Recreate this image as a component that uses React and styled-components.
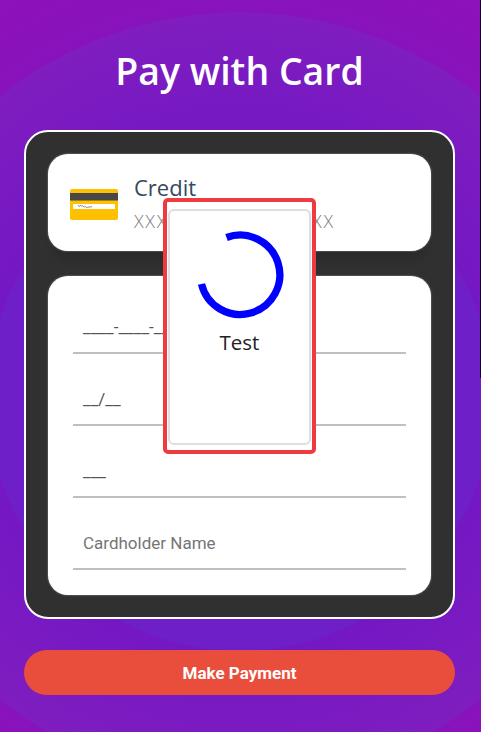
import styled, { createGlobalStyle } from "styled-components";

const GlobalStyle = createGlobalStyle`
  html, body {
    margin: 0;
    padding: 0;
    height: 100%;
  }
  body {
    font-family: "Open Sans", "Liberation Sans", sans-serif;
    overflow: hidden;
  }
`;

const Screen = styled.div`
  position: relative;
  box-sizing: border-box;
  width: 481px;
  height: 732px;
  padding: 44px 26px 0 24px;
  display: flex;
  flex-direction: column;
  align-items: stretch;
  background: radial-gradient(
    circle at 240px 398px,
    #6a20ca 0,
    #6f1fc7 252px,
    #7418c4 253px,
    #7f1dbf 385px,
    #8813bc 386px,
    #9010ba 480px
  );
`;

const EdgeStrip = styled.div`
  position: absolute;
  top: 0;
  right: 0;
  width: 1px;
  height: 378px;
  background: #14051e;
`;

const Title = styled.h1`
  margin: 0 0 32px;
  height: 54px;
  line-height: 54px;
  text-align: center;
  color: #fff;
  font-size: 37.4px;
  font-weight: 600;
`;

const Panel = styled.div`
  box-sizing: border-box;
  height: 489px;
  padding: 22px;
  display: flex;
  flex-direction: column;
  gap: 25px;
  background: #303030;
  border: 2px solid #fff;
  border-radius: 24px;
`;

const WhiteCard = styled.div`
  box-sizing: border-box;
  background: #fff;
  border-radius: 20px;
  box-shadow: 0 0 2px rgba(200, 200, 200, 0.7);
`;

const CardRow = styled(WhiteCard)`
  height: 97px;
  flex: none;
  padding: 0 22px;
  display: flex;
  align-items: center;
  gap: 16px;
  box-shadow: 0 0 2px rgba(200, 200, 200, 0.7), 0 12px 8px -4px rgba(0, 0, 0, 0.12);
`;

const CardInfo = styled.div`
  display: flex;
  flex-direction: column;
`;

const CardType = styled.div`
  color: #34495e;
  font-size: 22px;
  line-height: 28px;
`;

const CardNumber = styled.div`
  margin-top: 8px;
  color: #808080;
  font-size: 18px;
  font-weight: 300;
  line-height: 24px;
  letter-spacing: 1.68px;
  white-space: nowrap;
`;

const FormCard = styled(WhiteCard)`
  flex: 1;
  padding: 6px 25px 0;
  display: flex;
  flex-direction: column;
`;

const Field = styled.div`
  box-sizing: border-box;
  height: 72px;
  padding: 0 10px 0;
  display: flex;
  align-items: flex-end;
  border-bottom: 2px solid #c0c0c0;
`;

const FieldText = styled.span`
  padding-bottom: 15px;
  font-family: Roboto, "Liberation Sans", sans-serif;
  font-size: 17px;
  line-height: 20px;
  color: ${(p) => (p.$placeholder ? "#757575" : "#555")};
  white-space: nowrap;
`;

const PayButton = styled.button`
  margin-top: 31px;
  height: 45px;
  border: none;
  border-radius: 23px;
  background: #e94e3d;
  color: #fff;
  font-family: Roboto, "Liberation Sans", sans-serif;
  font-size: 17px;
  font-weight: 700;
`;

const Overlay = styled.div`
  position: absolute;
  left: 163px;
  top: 198px;
  box-sizing: border-box;
  width: 153px;
  height: 256px;
  padding: 7px 1px 5px;
  display: flex;
  background: #fff;
  border: 4px solid #ee3b3f;
  border-radius: 5px;
`;

const OverlayInner = styled.div`
  flex: 1;
  box-sizing: border-box;
  padding-top: 20px;
  display: flex;
  flex-direction: column;
  align-items: center;
  border: 2px solid #dedede;
  border-radius: 6px;
`;

const Spinner = styled.svg`
  width: 88px;
  height: 88px;
  display: block;
`;

const OverlayLabel = styled.div`
  margin-top: 9px;
  font-size: 20.5px;
  line-height: 28px;
  color: #222;
`;

const IconSvg = styled.svg`
  flex: none;
  margin-top: 4px;
`;

function CardIcon() {
  return (
    <IconSvg width="48" height="31" viewBox="0 0 48 31">
      <rect width="48" height="31" rx="2" fill="#ffc000" />
      <rect y="4" width="48" height="7.5" fill="#474747" />
      <rect x="3" y="15" width="42" height="5" fill="#fff" />
      <path
        d="M8 17c1-2 1 2 2 0s1 1 2 0 1 1 2 1 1-1 2 0 2 0 3 0 2 0 3-.5"
        fill="none"
        stroke="#555"
        strokeWidth="0.7"
      />
    </IconSvg>
  );
}

export default function App() {
  return (
    <Screen>
      <GlobalStyle />
      <EdgeStrip />
      <Title>Pay with Card</Title>
      <Panel>
        <CardRow>
          <CardIcon />
          <CardInfo>
            <CardType>Credit</CardType>
            <CardNumber>XXXX XXXX XXXX XXXX</CardNumber>
          </CardInfo>
        </CardRow>
        <FormCard>
          <Field>
            <FieldText>____-____-____-____</FieldText>
          </Field>
          <Field>
            <FieldText>__/__</FieldText>
          </Field>
          <Field>
            <FieldText>___</FieldText>
          </Field>
          <Field>
            <FieldText $placeholder>Cardholder Name</FieldText>
          </Field>
        </FormCard>
      </Panel>
      <PayButton>Make Payment</PayButton>
      <Overlay>
        <OverlayInner>
          <Spinner viewBox="0 0 88 88">
            <path
              d="M30.5 6.5A39.7 39.7 0 1 1 5.5 53"
              fill="none"
              stroke="#0000ff"
              strokeWidth="7.3"
            />
          </Spinner>
          <OverlayLabel>Test</OverlayLabel>
        </OverlayInner>
      </Overlay>
    </Screen>
  );
}
